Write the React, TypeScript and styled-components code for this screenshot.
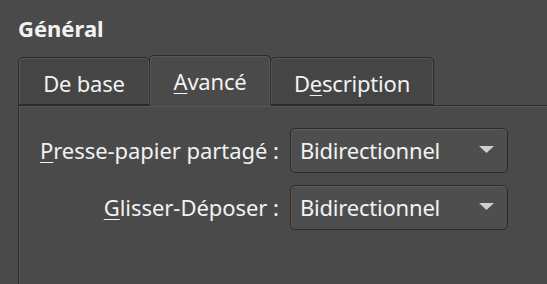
import React from 'react';
import styled, { createGlobalStyle } from 'styled-components';

const GlobalStyle = createGlobalStyle`
  html, body {
    margin: 0;
    padding: 0;
    background: #4a4a4a;
  }
  body {
    font-family: 'Noto Sans', 'Open Sans', sans-serif;
    color: #f2f2f2;
    overflow: hidden;
  }
`;

const Page = styled.div`
  width: 547px;
  height: 284px;
  padding: 14px 0 0 18px;
  box-sizing: border-box;
  display: flex;
  flex-direction: column;
`;

const Title = styled.div`
  font-size: 22px;
  font-weight: 700;
  line-height: 28px;
`;

const TabBar = styled.div`
  display: flex;
  align-items: flex-end;
  height: 51px;
  margin-top: 12px;
  position: relative;
  z-index: 1;
`;

const Tab = styled.div<{ $active?: boolean; $width: number }>`
  width: ${(p) => p.$width}px;
  height: ${(p) => (p.$active ? 51 : 48)}px;
  box-sizing: border-box;
  display: flex;
  align-items: center;
  justify-content: center;
  padding-top: ${(p) => (p.$active ? 0 : 4)}px;
  font-size: 22px;
  letter-spacing: -0.2px;
  background: ${(p) => (p.$active ? '#4a4a4a' : '#454545')};
  border: 1px solid #2c2c2c;
  border-bottom: ${(p) => (p.$active ? '1px solid #4a4a4a' : '1px solid #2c2c2c')};
  border-radius: 5px 5px 0 0;
  box-shadow: inset 1px 1px 0 #575757, inset -1px 0 0 #575757;
  margin-bottom: ${(p) => (p.$active ? -1 : 0)}px;
  margin-left: ${(p) => (p.$active ? -1 : 0)}px;
  margin-right: ${(p) => (p.$active ? -1 : 0)}px;
  position: relative;
  z-index: ${(p) => (p.$active ? 2 : 1)};

  u {
    text-decoration-thickness: 1px;
    text-underline-offset: 3px;
  }
`;

const Panel = styled.div`
  flex: 1;
  background: #4a4a4a;
  border-top: 1px solid #2c2c2c;
  border-left: 1px solid #2c2c2c;
  box-shadow: inset 1px 1px 0 #575757;
  padding: 22px 0 0 21px;
`;

const Form = styled.div`
  display: grid;
  grid-template-columns: auto 218px;
  column-gap: 11px;
  row-gap: 12px;
  align-items: center;
  justify-content: start;
`;

const Label = styled.label`
  justify-self: end;
  font-size: 22px;
  letter-spacing: -0.05px;
  padding-bottom: 2px;

  u {
    text-decoration-thickness: 1px;
    text-underline-offset: 3px;
  }
`;

const Combo = styled.div`
  height: 45px;
  box-sizing: border-box;
  display: flex;
  align-items: center;
  justify-content: space-between;
  padding: 0 13px 2px 9px;
  font-size: 22px;
  letter-spacing: -0.2px;
  background: #4e4e4e;
  border: 1px solid #2b2b2b;
  border-radius: 5px;
  box-shadow: inset 0 1px 0 #5e5e5e, inset 1px 0 0 #585858;
`;

const Arrow = () => (
  <svg width="15" height="7" viewBox="0 0 15 7">
    <path d="M0 0 L15 0 L7.5 7 Z" fill="#cfcfcf" />
  </svg>
);

export default function App() {
  const rows = [
    { key: 'P', rest: 'resse-papier partagé :' },
    { key: 'G', rest: 'lisser-Déposer :' }
  ];
  return (
    <>
      <GlobalStyle />
      <Page>
        <Title>Général</Title>
        <TabBar>
          <Tab $width={132}>De base</Tab>
          <Tab $width={122} $active>
            <span>
              <u>A</u>vancé
            </span>
          </Tab>
          <Tab $width={164}>
            <span>
              D<u>e</u>scription
            </span>
          </Tab>
        </TabBar>
        <Panel>
          <Form>
            {rows.map((r) => (
              <React.Fragment key={r.key}>
                <Label>
                  <u>{r.key}</u>
                  {r.rest}
                </Label>
                <Combo>
                  <span>Bidirectionnel</span>
                  <Arrow />
                </Combo>
              </React.Fragment>
            ))}
          </Form>
        </Panel>
      </Page>
    </>
  );
}
